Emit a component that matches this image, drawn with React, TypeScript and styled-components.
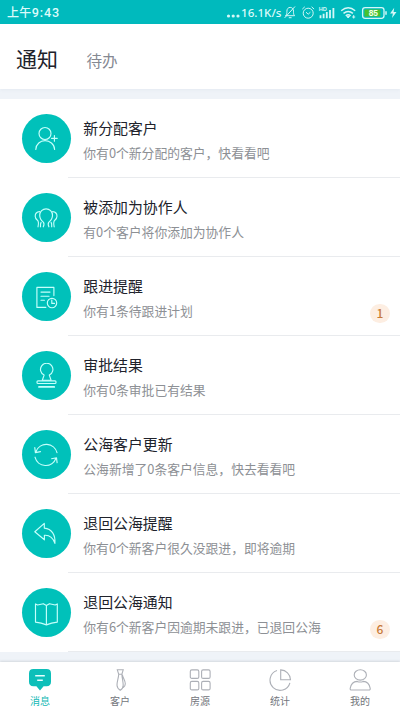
import React from "react";
import styled, { createGlobalStyle } from "styled-components";

const Global = createGlobalStyle`
  * { box-sizing: border-box; }
  body {
    margin: 0;
    background: #eff2f8;
    font-family: "Noto Sans CJK SC", sans-serif;
  }
`;

const Screen = styled.div`
  display: flex;
  flex-direction: column;
  width: 400px;
  height: 711px;
  overflow: hidden;
  background: #eff3f8;
`;

const StatusBar = styled.div`
  display: flex;
  flex: none;
  align-items: center;
  justify-content: space-between;
  height: 24px;
  padding: 1px 2px 0 7px;
  background: #00babd;
  color: #dcfafa;
`;

const Clock = styled.span`
  font-size: 12px;
  line-height: 22px;
  font-weight: 500;
  letter-spacing: 0.35px;
`;

const ClockTime = styled.span`
  font-family: Roboto, sans-serif;
  font-size: 12.6px;
  letter-spacing: 0.85px;
`;

const StatusIcons = styled.div`
  display: flex;
  align-items: center;
  height: 22px;
`;

const Speed = styled.span`
  width: 41px;
  font-family: "Noto Sans", sans-serif;
  font-size: 11.6px;
  line-height: 22px;
  font-weight: 500;
  white-space: nowrap;
`;

const Header = styled.header`
  display: flex;
  flex: none;
  align-items: center;
  gap: 28.5px;
  height: 65px;
  padding-left: 16px;
  background: #fff;
  box-shadow: 0 1px 3px rgba(120, 135, 160, 0.08);
`;

const HeaderTab = styled.span<{ $active?: boolean }>`
  font-size: ${(p) => (p.$active ? "21px" : "15.6px")};
  line-height: 30px;
  margin-top: ${(p) => (p.$active ? "3px" : "7px")};
  color: ${(p) => (p.$active ? "#20222b" : "#858992")};
`;

const List = styled.main`
  flex: none;
  margin-top: 10px;
  background: #fff;
`;

const Row = styled.div`
  display: flex;
  height: 79px;
  padding-left: 21.5px;
`;

const Disc = styled.div`
  display: flex;
  flex: none;
  align-items: center;
  justify-content: center;
  width: 49px;
  height: 49px;
  margin-top: 15px;
  border-radius: 50%;
  background: #00c1ba;
`;

const RowBody = styled.div`
  display: flex;
  flex: 1;
  justify-content: space-between;
  margin-left: -2.5px;
  padding: 18px 10px 0 15.3px;
  border-bottom: 1px solid #e9ebee;
`;

const Title = styled.div`
  font-size: 14.9px;
  line-height: 22px;
  color: #20222b;
  white-space: nowrap;
`;

const Detail = styled.div`
  margin-top: 4px;
  font-size: 12.8px;
  line-height: 20px;
  color: #8d9095;
  white-space: nowrap;
`;

const Badge = styled.span`
  width: 20px;
  height: 19px;
  margin-top: 28.5px;
  border-radius: 10px;
  background: #fdeee2;
  color: #c87a38;
  font-size: 12px;
  line-height: 18px;
  font-weight: 500;
  text-align: center;
`;

const TabBar = styled.nav`
  display: flex;
  flex: none;
  height: 49px;
  margin-top: auto;
  background: #fff;
  box-shadow: 0 -1px 2px rgba(80, 85, 100, 0.16);
`;

const Tab = styled.div<{ $active?: boolean }>`
  display: flex;
  flex: 1;
  flex-direction: column;
  align-items: center;
  padding-top: 6px;
  color: ${(p) => (p.$active ? "#13b9b5" : "#72757b")};
  font-size: 10px;
  line-height: 14px;
`;

const TabIcon = styled.svg`
  width: 24px;
  height: 24px;
  margin-bottom: 2px;
  fill: none;
  stroke: #adb0b7;
  stroke-width: 1.1;
`;

const LineIcon = styled.svg`
  width: 26px;
  height: 26px;
  fill: none;
  stroke: #c5fffb;
  stroke-width: 1.15;
  stroke-linecap: round;
  stroke-linejoin: round;
`;

const rows: { title: string; detail: string; badge?: number; icon: React.ReactNode }[] = [
  {
    title: "新分配客户",
    detail: "你有0个新分配的客户，快看看吧",
    icon: (
      <>
        <circle cx="12" cy="7.5" r="6" />
        <path d="M2.8 23.4C3 18 7.4 14.6 12 14.6S21.4 18 21.6 23.4M18.6 12.4h5.6M21.4 9.6v5.6" />
      </>
    ),
  },
  {
    title: "被添加为协作人",
    detail: "有0个客户将你添加为协作人",
    icon: (
      <>
        <path d="M10.3 21.8c.8-1.7.9-3.6 0-4.7-2-1.5-3.6-3.8-3.6-6.9a6.4 6.4 0 0 1 12.8 0c0 3.1-1.6 5.4-3.6 6.9-.9 1.1-.8 3 0 4.7" />
        <path d="M6.6 6.6C3.8 6.8 2.2 8.8 2.2 11.2c0 1.9 1 3 2.2 4 1.2 1 1.2 4 .6 6.6M19.6 6.6c2.8.2 4.4 2.2 4.4 4.6 0 1.9-1 3-2.2 4-1.2 1-1.2 4-.6 6.6M8.1 17.4c-.7 1-.7 2.8-.6 4.4M18.1 17.4c.7 1 .7 2.8.6 4.4" />
      </>
    ),
  },
  {
    title: "跟进提醒",
    detail: "你有1条待跟进计划",
    badge: 1,
    icon: (
      <>
        <path d="M12.8 23.4H3.9V3.4h17v8.2M8 8.1h9M8 12.2h8M8 16.2h3.4" />
        <circle cx="19" cy="19" r="4.7" />
        <path d="M18.8 16v3.4h2.7" />
      </>
    ),
  },
  {
    title: "审批结果",
    detail: "你有0条审批已有结果",
    icon: (
      <>
        <path d="M9.3 17.2l1.8-5.1a6.2 6.2 0 1 1 5.2 0l1.8 5.1z" />
        <rect x="4" y="17.8" width="19" height="2.7" rx="1" />
        <path d="M6 23.9h15.2" strokeWidth="1.8" />
      </>
    ),
  },
  {
    title: "公海客户更新",
    detail: "公海新增了0条客户信息，快去看看吧",
    icon: (
      <path d="M24 10.7A11 11 0 0 0 3 9.5M1.8 5.6l.6 5 5.1-1M2 15.2a11 11 0 0 0 21 1.1M18.6 16.7l4.9-.9.6 4.8" />
    ),
  },
  {
    title: "退回公海提醒",
    detail: "你有0个新客户很久没跟进，即将逾期",
    icon: (
      <path d="M11.3 2.4L1.8 10.8l9.6 8v-4.5c5.4-.4 8.6 2.3 10.5 8.1.7-8.4-3-14.6-10.6-15.3z" />
    ),
  },
  {
    title: "退回公海通知",
    detail: "你有6个新客户因逾期未跟进，已退回公海",
    badge: 6,
    icon: (
      <path d="M13.4 5.6L10.3 3.7 4.6 5 2.5 3.9v18.2q5.8.7 10.9 2.8 5.1-2.1 10.9-2.8V3.9L22.2 5l-5.7-1.3zv19.3" />
    ),
  },
];

const tabs: { label: string; icon: React.ReactNode }[] = [
  {
    label: "消息",
    icon: (
      <>
        <path
          d="M5.4 1h13.2Q23 1 23 5.4v8.4q0 4.4-4.4 4.4h-3L12 22.4l-3.6-4.2h-3Q1 18.2 1 13.8V5.4Q1 1 5.4 1Z"
          fill="#0dbfb9"
          stroke="none"
        />
        <path d="M7.2 7.7h9.6M9.2 12.3h5.6" stroke="#e8ffff" strokeWidth="1.5" />
      </>
    ),
  },
  {
    label: "客户",
    icon: (
      <path d="M9.3 1.8h5.9l-1.3 4.4h-3.2zM10.7 6.2C10.6 10 8.9 13.5 9 17.3c.1 2.4 1.6 4 3.2 5 1.8-1 3-2.6 3-5 0-3.8-1.2-7.3-1.3-11.1M14.4 6.8c.3 3 2.9 5.6 2.9 8.9 0 1.6-.8 2.9-2.1 4" />
    ),
  },
  {
    label: "房源",
    icon: (
      <>
        <rect x="2.3" y="1.9" width="8.5" height="8.5" rx="1.5" />
        <rect x="13.6" y="1.9" width="8.5" height="8.5" rx="1.5" />
        <rect x="2.3" y="13.4" width="8.5" height="8.5" rx="1.5" />
        <rect x="13.6" y="13.4" width="8.5" height="8.5" rx="1.5" />
      </>
    ),
  },
  {
    label: "统计",
    icon: <path d="M9 2.6A10.1 10.1 0 1 0 21.9 14.8M12.7 1.9v9.8h9.8C22.3 6.4 18 2.1 12.7 1.9z" />,
  },
  {
    label: "我的",
    icon: (
      <>
        <ellipse cx="12.3" cy="6.9" rx="6.1" ry="5.2" />
        <path d="M3.6 22h17.2q1.7 0 1.4-1.7c-.8-4.4-3.6-6.7-7-6.9-2 .8-4 .8-6 0-3.4.2-6.2 2.5-7 6.9Q1.9 22 3.6 22z" />
      </>
    ),
  },
];

// Connectivity, alarm and battery indicators at the right of the status bar.
const SystemIcons = () => (
  <svg width="116" height="20" viewBox="282 2.5 116 20" fill="none" stroke="#d5f7f7" strokeWidth="1">
    <path d="M285.5 15.2h9.1c-1.1-1.2-1.1-2.3-1.1-4.5 0-2.2-1.2-3.8-3.3-3.8s-3.3 1.6-3.3 3.8c0 2.2 0 3.3-1.4 4.5zM288.8 17.2h2.8M284.6 17.4L295 6" />
    <circle cx="308.2" cy="12.7" r="5" />
    <path d="M306 11.7l2.2 2 2.2-2M302.3 8.6l2.5-2.3M311.6 6.3l2.5 2.3" />
    <text x="318.7" y="10.3" fill="#d5f7f7" stroke="none" fontSize="5.6" fontFamily="Liberation Sans, sans-serif" fontWeight="700">
      HD
    </text>
    <path d="M320.5 17.7v-3M323.6 17.7v-4.5M326.8 17.7v-6.2M330 17.7V9.5M333.4 17.7V7.5" strokeWidth="1.8" />
    <path d="M341.2 10.2q7-5.8 14 0M343.5 12.9q4.7-3.9 9.4 0M345.7 15.3q2.5-2.1 5 0" strokeWidth="1.4" />
    <path d="M346.8 15.8l1.4 1.7 1.4-1.7z" fill="#d5f7f7" />
    <path d="M353.7 14.6v3.4M352.2 16.5h3" />
    <rect x="362.6" y="7.1" width="21.4" height="10.7" rx="2.5" strokeWidth="1.3" />
    <rect x="364.5" y="9" width="15.8" height="7" rx="0.6" fill="#48c12d" stroke="none" />
    <path d="M386 10.7v3.5" strokeWidth="1.5" />
    <text x="373.3" y="15.5" fill="#f3ffe9" stroke="none" fontSize="8.4" fontFamily="Liberation Sans, sans-serif" fontWeight="700" textAnchor="middle">
      85
    </text>
    <path d="M394.2 7.2l-4.1 5.9h2.8l-.9 4.5 4.5-6.1h-2.9z" fill="#d5f7f7" stroke="none" />
  </svg>
);

export default function App() {
  return (
    <Screen>
      <Global />
      <StatusBar>
        <Clock>
          上午<ClockTime>9:43</ClockTime>
        </Clock>
        <StatusIcons>
          <svg width="15" height="22" fill="#d5f7f7">
            <circle cx="2.5" cy="14" r="1.6" />
            <circle cx="7.2" cy="14" r="1.6" />
            <circle cx="12" cy="14" r="1.6" />
          </svg>
          <Speed>16.1K/s</Speed>
          <SystemIcons />
        </StatusIcons>
      </StatusBar>
      <Header>
        <HeaderTab $active>通知</HeaderTab>
        <HeaderTab>待办</HeaderTab>
      </Header>
      <List>
        {rows.map((row) => (
          <Row key={row.title}>
            <Disc>
              <LineIcon viewBox="0 0 26 26">{row.icon}</LineIcon>
            </Disc>
            <RowBody>
              <div>
                <Title>{row.title}</Title>
                <Detail>{row.detail}</Detail>
              </div>
              {row.badge !== undefined && <Badge>{row.badge}</Badge>}
            </RowBody>
          </Row>
        ))}
      </List>
      <TabBar>
        {tabs.map((tab, index) => (
          <Tab key={tab.label} $active={index === 0}>
            <TabIcon viewBox="0 0 24 24">{tab.icon}</TabIcon>
            {tab.label}
          </Tab>
        ))}
      </TabBar>
    </Screen>
  );
}
